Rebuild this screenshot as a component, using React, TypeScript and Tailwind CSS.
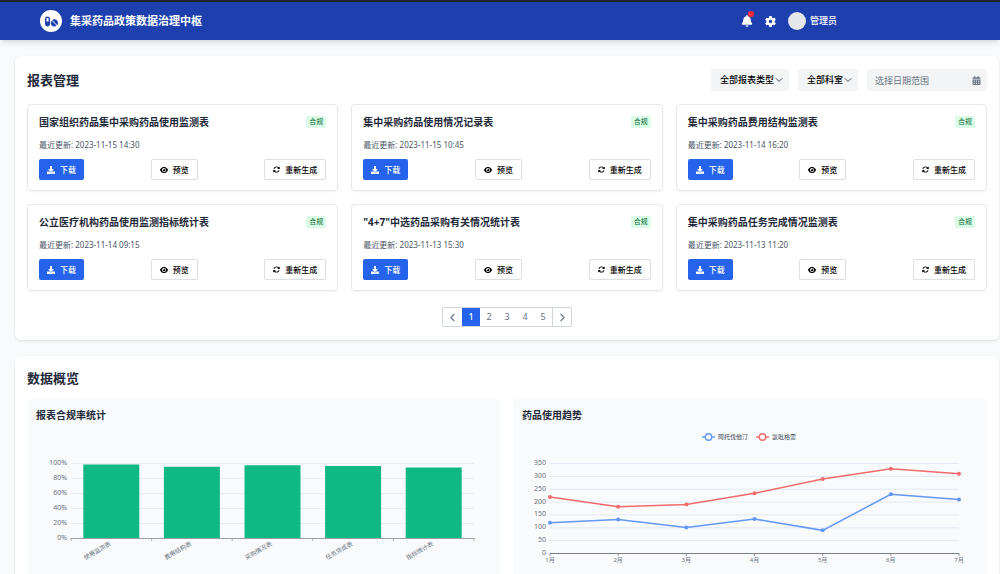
import { FaDownload } from 'react-icons/fa';
import { FaBell, FaEye, FaPills, FaGear, FaArrowsRotate, FaCalendarDays } from 'react-icons/fa6';
import { ChevronDown, ChevronLeft, ChevronRight } from 'lucide-react';

interface Report {
  title: string;
  updatedAt: string;
}

const REPORTS: Report[] = [
  { title: '国家组织药品集中采购药品使用监测表', updatedAt: '2023-11-15 14:30' },
  { title: '集中采购药品使用情况记录表', updatedAt: '2023-11-15 10:45' },
  { title: '集中采购药品费用结构监测表', updatedAt: '2023-11-14 16:20' },
  { title: '公立医疗机构药品使用监测指标统计表', updatedAt: '2023-11-14 09:15' },
  { title: '"4+7"中选药品采购有关情况统计表', updatedAt: '2023-11-13 15:30' },
  { title: '集中采购药品任务完成情况监测表', updatedAt: '2023-11-13 11:20' },
];

const COMPLIANCE = [
  { name: '使用监测表', value: 98 },
  { name: '费用结构表', value: 95 },
  { name: '采购情况表', value: 97 },
  { name: '任务完成表', value: 96 },
  { name: '指标统计表', value: 94 },
];

const MONTHS = ['1月', '2月', '3月', '4月', '5月', '6月', '7月'];

const TRENDS = [
  { name: '阿托伐他汀', color: '#6297f8', legendX: 180, data: [120, 132, 101, 134, 90, 230, 210] },
  { name: '氯吡格雷', color: '#f26b6b', legendX: 234, data: [220, 182, 191, 234, 290, 330, 310] },
];

function Header() {
  return (
    <header className="relative flex items-center justify-between border-t-2 border-[#20242c] bg-[#1e40af] py-2 pr-[163px] pl-10 text-white shadow-md">
      <div className="flex items-center gap-2">
        <div className="flex size-[22px] items-center justify-center rounded-full bg-white text-[#1e40af]">
          <FaPills className="size-[13px]" />
        </div>
        <h1 className="text-[11px] leading-4 font-bold">集采药品政策数据治理中枢</h1>
      </div>
      <div className="flex items-center gap-3">
        <button className="relative" aria-label="通知">
          <FaBell className="size-[12px]" />
          <span className="absolute -top-1 -right-px size-[6px] rounded-full bg-red-500" />
        </button>
        <button aria-label="设置">
          <FaGear className="size-[11px]" />
        </button>
        <div className="flex items-center gap-1">
          <div className="size-[18px] rounded-full bg-gray-200" />
          <span className="text-[9px] leading-4 font-medium">管理员</span>
        </div>
      </div>
    </header>
  );
}

function FilterSelect({ label, option }: { label: string; option: string }) {
  return (
    <div className="relative flex items-center">
      <select
        aria-label={label}
        className="h-[22px] appearance-none rounded-xs bg-gray-100 pr-[14px] pl-[9px] text-[9px] font-medium text-black"
      >
        <option>{option}</option>
      </select>
      <ChevronDown className="pointer-events-none absolute right-1 size-[12px] text-gray-600" strokeWidth={2} />
    </div>
  );
}

function ReportCard({ report }: { report: Report }) {
  return (
    <article className="rounded border border-gray-200 px-[11px] py-[10px] shadow-xs">
      <div className="flex items-center justify-between">
        <h3 className="text-[10px] leading-[14px] font-bold text-gray-800">{report.title}</h3>
        <span className="rounded-xs bg-green-100 px-[3px] text-[7px] leading-3 text-green-800">合规</span>
      </div>
      <p className="mt-[9px] text-[8px] leading-[14px] text-gray-600">最近更新: {report.updatedAt}</p>
      <div className="mt-[7px] flex justify-between text-[8px] font-medium text-black">
        <button className="flex h-[21px] items-center gap-[5px] rounded-xs bg-[#2563eb] px-2 text-white">
          <FaDownload className="size-[8px]" />
          下载
        </button>
        <button className="flex h-[21px] items-center gap-[5px] rounded-xs border border-[#dcdfe4] px-2">
          <FaEye className="size-[8px]" />
          预览
        </button>
        <button className="flex h-[21px] items-center gap-[5px] rounded-xs border border-[#dcdfe4] px-2">
          <FaArrowsRotate className="size-[7px]" />
          重新生成
        </button>
      </div>
    </article>
  );
}

function Pagination() {
  return (
    <nav aria-label="分页" className="mt-4 flex justify-center">
      <div className="flex h-5 overflow-hidden rounded-xs border border-gray-300 text-[9px] text-gray-500">
        <button aria-label="上一页" className="flex w-[19px] items-center justify-center">
          <ChevronLeft className="size-[13px]" strokeWidth={2} />
        </button>
        {[1, 2, 3, 4, 5].map((page) => (
          <button key={page} className={page === 1 ? 'w-[18px] bg-[#2563eb] font-medium text-white' : 'w-[18px]'}>
            {page}
          </button>
        ))}
        <button aria-label="下一页" className="flex w-[19px] items-center justify-center border-l border-gray-300">
          <ChevronRight className="size-[13px]" strokeWidth={2} />
        </button>
      </div>
    </nav>
  );
}

function ComplianceChart() {
  const left = 35;
  const right = 438;
  const top = 38;
  const bottom = 113;
  const step = (right - left) / COMPLIANCE.length;
  const y = (value: number) => bottom - (value / 100) * (bottom - top);

  return (
    <svg viewBox="0 0 456 160" className="block w-full" role="img" aria-label="报表合规率统计">
      {[0, 20, 40, 60, 80, 100].map((tick) => (
        <g key={tick}>
          {tick > 0 && (
            <line x1={left} x2={right} y1={y(tick) + 0.5} y2={y(tick) + 0.5} stroke="#e6e9f0" strokeWidth="0.8" />
          )}
          <text x={left - 4} y={y(tick) + 2} textAnchor="end" className="fill-gray-500 text-[7px]">
            {tick}%
          </text>
        </g>
      ))}
      {COMPLIANCE.map((item, i) => {
        const center = left + step * (i + 0.5);
        return (
          <g key={item.name}>
            <rect x={center - 28} y={y(item.value)} width="56" height={bottom - y(item.value)} fill="#10b981" />
            <text
              transform={`translate(${center} 120) rotate(-30)`}
              textAnchor="end"
              className="fill-gray-500 text-[6px]"
            >
              {item.name}
            </text>
          </g>
        );
      })}
      <line x1={left} x2={right} y1={bottom + 0.5} y2={bottom + 0.5} stroke="#9a9da5" />
      {[0, 1, 2, 3, 4, 5].map((i) => (
        <line key={i} x1={left + step * i} x2={left + step * i} y1={bottom} y2={bottom + 3} stroke="#9a9da5" strokeWidth="0.8" />
      ))}
    </svg>
  );
}

function TrendChart() {
  const left = 28;
  const right = 437;
  const top = 38;
  const bottom = 128;
  const step = (right - left) / (MONTHS.length - 1);
  const y = (value: number) => bottom - (value / 350) * (bottom - top);

  return (
    <svg viewBox="0 0 456 160" className="block w-full" role="img" aria-label="药品使用趋势">
      {TRENDS.map((series) => (
        <g key={series.name} stroke={series.color}>
          <line x1={series.legendX} x2={series.legendX + 13} y1="12" y2="12" strokeWidth="1.4" />
          <circle cx={series.legendX + 6.5} cy="12" r="3.2" fill="#fff" strokeWidth="1.4" />
          <text x={series.legendX + 16} y="14" stroke="none" className="fill-gray-700 text-[6px]">
            {series.name}
          </text>
        </g>
      ))}
      {[0, 50, 100, 150, 200, 250, 300, 350].map((tick) => (
        <g key={tick}>
          {tick > 0 && (
            <line x1={left} x2={right} y1={y(tick) + 0.5} y2={y(tick) + 0.5} stroke="#e0e6f1" strokeWidth="0.9" />
          )}
          <text x={left - 4} y={y(tick) + 2} textAnchor="end" className="fill-gray-500 text-[7px]">
            {tick}
          </text>
        </g>
      ))}
      <line x1={left} x2={right} y1={bottom + 0.5} y2={bottom + 0.5} stroke="#7b7f88" />
      {MONTHS.map((month, i) => (
        <g key={month}>
          <line x1={left + step * i} x2={left + step * i} y1={bottom} y2={bottom + 3} stroke="#7b7f88" strokeWidth="0.8" />
          <text x={left + step * i} y={bottom + 9} textAnchor="middle" className="fill-gray-500 text-[6px]">
            {month}
          </text>
        </g>
      ))}
      {TRENDS.map((series) => (
        <g key={series.name}>
          <polyline
            points={series.data.map((value, i) => `${left + step * i},${y(value) + 0.5}`).join(' ')}
            fill="none"
            stroke={series.color}
            strokeWidth="1.5"
          />
          {series.data.map((value, i) => (
            <circle key={i} cx={left + step * i} cy={y(value) + 0.5} r="2" fill={series.color} />
          ))}
        </g>
      ))}
    </svg>
  );
}

export default function App() {
  return (
    <div className="min-h-screen bg-gray-50 font-['Noto_Sans','Noto_Sans_CJK_SC',sans-serif] text-gray-800">
      <Header />

      <main className="flex flex-col gap-4 pt-4 pr-px pb-4 pl-[15px]">
        {/* Reports */}
        <section className="rounded-md bg-white px-3 py-[13px] shadow">
          <div className="flex items-center justify-between">
            <h2 className="text-[13px] leading-[18px] font-bold">报表管理</h2>
            <div className="flex items-center gap-[9px]">
              <FilterSelect label="报表类型" option="全部报表类型" />
              <FilterSelect label="科室" option="全部科室" />
              <div className="relative flex items-center">
                <input
                  type="text"
                  aria-label="日期范围"
                  placeholder="选择日期范围"
                  className="h-[22px] w-[120px] rounded-xs bg-gray-100 pr-5 pl-2 text-[9px] placeholder:text-gray-500"
                />
                <FaCalendarDays className="pointer-events-none absolute right-[6px] size-[9px] text-gray-500" />
              </div>
            </div>
          </div>
          <div className="mt-[13px] grid grid-cols-3 gap-[13px]">
            {REPORTS.map((report) => (
              <ReportCard key={report.title} report={report} />
            ))}
          </div>
          <Pagination />
        </section>

        {/* Overview */}
        <section className="rounded-md bg-white px-3 py-[13px] shadow">
          <h2 className="text-[13px] leading-[18px] font-bold">数据概览</h2>
          <div className="mt-3 grid grid-cols-2 gap-3">
            <div className="rounded bg-gray-50 p-[9px]">
              <h3 className="mb-[3px] text-[10px] leading-[14px] font-bold">报表合规率统计</h3>
              <ComplianceChart />
            </div>
            <div className="rounded bg-gray-50 p-[9px]">
              <h3 className="mb-[3px] text-[10px] leading-[14px] font-bold">药品使用趋势</h3>
              <TrendChart />
            </div>
          </div>
        </section>
      </main>
    </div>
  );
}
